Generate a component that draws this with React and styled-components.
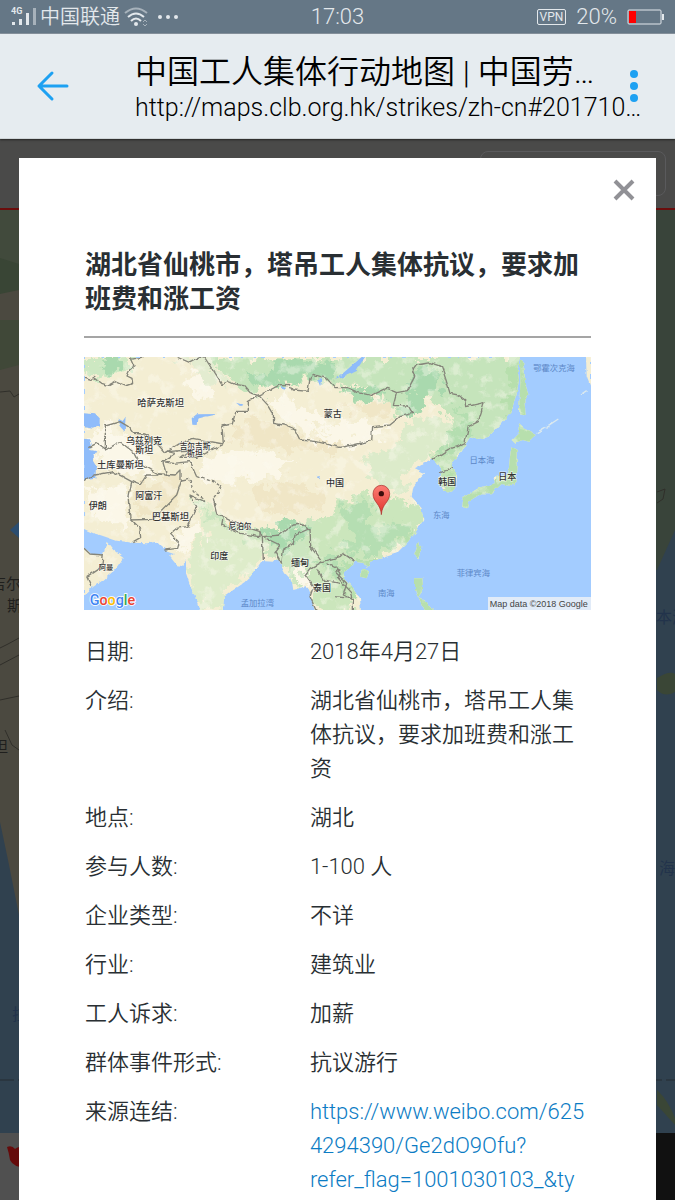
import React from "react";
import styled, { createGlobalStyle } from "styled-components";

const GlobalStyle = createGlobalStyle`
  * {
    box-sizing: border-box;
  }
  body {
    margin: 0;
    background: #4a4a49;
    color: #292f33;
    font-family: Roboto, "Noto Sans CJK SC", sans-serif;
    font-weight: 350;
  }
`;

const Page = styled.div`
  position: relative;
  display: flex;
  flex-direction: column;
  height: 100vh;
  overflow: hidden;
`;

const StatusBar = styled.div`
  display: grid;
  grid-template-columns: 1fr auto 1fr;
  align-items: center;
  flex: none;
  height: 34px;
  padding: 0 11px;
  background: #657786;
  border-bottom: 1px solid #8995a0;
  color: #e3e8ec;
  font-size: 22px;
  line-height: 34px;
`;

const StatusGroup = styled.div`
  display: flex;
  align-items: center;
  gap: ${({ $gap }) => $gap}px;
  justify-content: ${({ $end }) => ($end ? "flex-end" : "flex-start")};
`;

const Carrier = styled.span`
  font-size: 20px;
`;

const Vpn = styled.span`
  border: 1px solid #e3e8ec;
  border-radius: 2px;
  padding: 0 2px;
  font-size: 12px;
  font-weight: 400;
  line-height: 14px;
`;

const AppBar = styled.header`
  position: relative;
  z-index: 2;
  display: flex;
  align-items: center;
  flex: none;
  height: 105px;
  padding: 0 33px 0 29px;
  background: #e6ecf0;
  border-bottom: 1px solid #cfd5d8;
  box-shadow: 0 1px 2px rgba(0, 0, 0, 0.5);
  color: #000;
`;

const IconButton = styled.button`
  display: flex;
  flex: none;
  padding: 0;
  border: 0;
  background: none;
  cursor: pointer;
`;

const PageInfo = styled.div`
  flex: 1;
  min-width: 0;
  margin-left: 58px;
  padding-top: 4px;
`;

const PageTitle = styled.div`
  overflow: hidden;
  margin-right: 24px;
  font-size: 32px;
  line-height: 40px;
  text-overflow: ellipsis;
  white-space: nowrap;
`;

const PageUrl = styled.div`
  overflow: hidden;
  margin-right: -16px;
  font-size: 25px;
  line-height: 32px;
  text-overflow: ellipsis;
  white-space: nowrap;
`;

const Viewport = styled.main`
  position: relative;
  flex: 1;
  min-height: 0;
  padding: 19px 19px 0;
`;

const Backdrop = styled.div`
  position: absolute;
  inset: 0;
  display: flex;
  flex-direction: column;
`;

const SiteHeader = styled.div`
  flex: none;
  height: 71px;
  padding: 12px 9px 12px 480px;
  border-bottom: 2px solid #6b0d0c;
  background: #4a4a49;
`;

const SiteMenu = styled.div`
  height: 45px;
  border: 1px solid #5a5a5c;
  border-radius: 8px;
`;

const SiteMap = styled.svg`
  display: block;
  flex: 1;
  width: 100%;
  min-height: 0;
`;

const SiteFooter = styled.div`
  flex: none;
  height: 67px;
  background: linear-gradient(90deg, #505050 50%, #111 50%);
`;

const Modal = styled.section`
  position: relative;
  height: 100%;
  padding: 17px 65px 0;
  overflow: hidden;
  background: #fff;
`;

const CloseRow = styled.div`
  display: flex;
  justify-content: flex-end;
  margin: 0 -46px 43px 0;
`;

const Heading = styled.h1`
  margin: 0;
  padding-bottom: 20px;
  padding-left: 1px;
  border-bottom: 2px solid #a5a5a5;
  font-size: 26px;
  font-weight: 700;
  line-height: 34px;
`;

const Map = styled.svg`
  display: block;
  width: 100%;
  margin: 19px 0 25px;
  font-family: Roboto, "Noto Sans CJK SC", sans-serif;
`;

const Details = styled.dl`
  display: flex;
  flex-direction: column;
  gap: 15px;
  margin: 0;
  padding-left: 1px;
  font-size: 22px;
  line-height: 34px;
`;

const Row = styled.div`
  display: grid;
  grid-template-columns: 4fr 5fr;
`;

const Label = styled.dt``;

const Value = styled.dd`
  margin: 0;
  overflow-wrap: anywhere;
`;

const Link = styled.a`
  color: #0c7cc4;
  text-decoration: none;
`;

const land = [
  "M12 21H1320L1313 60 1317 90 1310 130 1295 180 1265 220 1225 260 1195 270 1170 262 1155 285 1140 310 1115 335 1120 350 1133 385 1130 410 1115 425 1090 422 1075 385 1090 370 1075 345 1060 325 1030 340 1005 355 1035 370 1015 390 1000 410 995 440 1025 475 1030 510 1005 550 980 580 950 610 905 625 870 635 860 655 855 640 825 635 795 665 795 690 825 720 840 745 843 785H705L690 730 680 705 660 715 640 720 635 690 615 670 605 650 595 625 580 635 545 633 528 658 510 680 490 700 460 720 432 740 428 785H362L345 740 330 705 318 670 318 630 310 648 290 645 270 620 285 612 265 605 245 590 230 575 200 580 160 578 110 572 80 562 60 555 40 550 12 537Z",
  "M12 593 40 615 70 612 80 575 100 600 131 625 110 655 70 690 40 710 12 735Z",
  "M1320 30 1333 40 1335 100 1345 130 1333 150 1337 195 1317 190 1321 100Z",
  "M1317 220 1340 240 1367 255 1345 275 1325 270 1305 280 1295 270 1315 250Z",
  "M1295 290 1313 300 1313 345 1310 390 1295 408 1265 402 1235 430 1205 430 1165 455 1145 445 1195 415 1245 400 1240 385 1285 370 1290 320Z",
  "M1150 440 1168 447 1160 475 1147 470Z",
  "M1015 580 1027 590 1015 625 1003 615Z",
  "M845 660 870 660 860 685 840 680Z",
  "M1005 685 1027 685 1030 720 1015 740 1005 720Z",
  "M1015 740 1040 755 1050 775 1075 785 1035 785Z",
  "M1518 21H1533V115L1520 80Z",
];

const greens = [
  { fill: "#cde8c2", d: "M12 21H150L150 60 90 75 12 85Z" },
  { fill: "#a9d9ae", d: "M70 21H130L110 60 95 70 75 45Z" },
  { fill: "#e3ecd0", d: "M290 21H380L440 100 400 110 350 70Z" },
  { fill: "#c5e4bb", d: "M380 21H1320V180L1200 285 1110 340 1060 320 1080 270 1110 200 1040 130 1000 190 950 195 900 130 850 110 780 110 700 90 600 105 530 130 440 90Z" },
  { fill: "#a9d9ae", d: "M580 25 760 40 770 90 690 80 630 100 540 120 500 70 570 80Z" },
  { fill: "#a9d9ae", d: "M1010 60 1060 50 1095 90 1060 130 1030 180 1000 200 960 190 990 140 990 90Z" },
  { fill: "#a9d9ae", d: "M800 115 930 120 890 145 830 150Z" },
  { fill: "#b4deb0", d: "M1105 160 1150 180 1180 240 1150 280 1110 310 1060 320 1110 260 1150 200Z" },
  { fill: "#dcebca", d: "M1000 210 1100 200 1120 250 1060 320 980 350 930 300Z" },
  { fill: "#deecca", d: "M330 440 400 470 430 520 560 560 540 640 430 740 420 785 360 785 320 640 380 540Z" },
  { fill: "#cce6c0", d: "M350 455 430 500 540 545 700 510 760 560 700 610 640 720 600 630 540 580 420 530Z" },
  { fill: "#a9d9ae", d: "M545 540 640 520 690 530 680 560 610 600 550 565Z" },
  { fill: "#cbe6bc", d: "M690 540 760 470 850 430 940 440 1000 460 1030 500 990 570 900 625 800 640 830 785H710L680 660Z" },
  { fill: "#b5deb2", d: "M770 480 850 450 880 480 850 520 910 540 950 500 990 530 940 590 870 610 790 600 830 550Z" },
  { fill: "#b5deb2", d: "M700 640 760 620 800 650 760 680 730 660Z" },
  { fill: "#dcebca", d: "M850 320 930 300 1000 340 970 390 1000 430 900 420Z" },
  { fill: "#c0e2b4", d: "M1050 325 1130 330 1140 420 1080 420Z" },
  { fill: "#b7dfad", d: "M1295 21H1400V490H1110V390H1260Z" },
  { fill: "#b7dfad", d: "M970 550H1110V820H970Z" },
  { fill: "#b7dfad", d: "M800 630H910V730H800Z" },
];

const sands = [
  "M370 340 420 310 560 300 640 340 600 370 520 390 430 400 360 385Z",
  "M560 150 600 140 700 190 740 240 680 250 620 210Z",
  "M770 220 860 215 930 240 880 265 800 290 690 270Z",
  "M20 240 90 230 200 310 230 370 150 380 60 340Z",
  "M330 70 390 90 400 140 350 140 310 100Z",
  "M20 420 150 400 140 540 40 510Z",
  "M280 560 350 510 370 560 300 620Z",
  "M640 660 680 640 690 700 640 715Z",
];

const ochres = [
  "M430 250 530 200 650 250 780 290 780 310 640 300 500 280Z",
  "M500 420 620 390 740 430 720 480 620 490 520 460Z",
  "M150 420 300 380 290 480 180 500Z",
  "M380 590 460 600 440 700 370 690Z",
  "M780 160 940 150 930 200 850 200Z",
];

const lakes = [
  "M12 187 45 190 59 205 59 225 38 233 12 228Z",
  "M12 266 30 268 36 285 30 300 52 304 36 328 48 348 46 386 12 391Z",
  "M112 205 128 213 137 200 134 242 122 228Z",
  "M335 205 350 193 415 192 375 200 352 206 350 225 337 224Z",
  "M765 90 800 60 845 21 855 21 830 60 790 80Z",
  "M602 107 618 110 612 121Z",
  "M712 88 725 84 720 108Z",
  "M468 158 490 164 480 168Z",
  "M710 380 720 378 716 388Z",
];

const borders = [
  "M12 85 30 90 42 82 65 100 85 106 105 95 135 108 158 100 156 85 141 78 150 58 162 50 152 28 190 21",
  "M290 21 330 38 360 22 375 24 425 103 442 93 465 103 492 107 510 128 536 136",
  "M536 136 570 120 600 104 628 103 640 120 684 124 690 85 700 73 740 85 765 113 800 112 835 128 875 136 920 115 950 128 982 122 1004 80 998 62 1010 45 1050 38 1085 50 1098 90 1110 130 1135 135 1155 150 1157 170 1212 158 1195 215 1165 230 1155 278 1130 290 1105 298 1058 328",
  "M536 136 568 170 580 190 581 220 610 225 645 240 660 270 710 275 780 292 820 285 875 272 878 230 930 225 960 200 998 190 985 168 940 166 950 128",
  "M536 136 505 155 505 184 467 184 457 222 426 228 430 282",
  "M76 300V228L120 215 145 230 160 250 195 252 235 285 255 308 300 280 340 265 430 282",
  "M25 293 50 280 76 300 95 290 120 275 165 310 180 340 235 372 260 375 248 335 280 340 330 335 350 380",
  "M235 372 285 375 300 360 300 390",
  "M248 335 285 310 260 305 330 300 300 322 350 322 430 282",
  "M12 393 45 375 100 365 155 395 145 450 150 505 180 535 182 565 160 578",
  "M155 395 180 405 200 375 235 375",
  "M150 510 215 508 240 485 290 435 305 390 330 385",
  "M253 600 290 595 295 575 272 550 290 535 320 530 350 470 330 435 375 455",
  "M400 445 410 490 430 500 480 525 540 545 547 560 600 555 640 525 670 522 690 540",
  "M430 500 425 525 480 550 540 560 540 545",
  "M547 560 550 630M547 560 600 585 585 605 605 640",
  "M605 640 610 600 640 580 645 555 690 535 692 590 725 635 780 620",
  "M725 635 690 655 675 675 700 710 690 740 710 785",
  "M710 655 730 690 780 700M740 640 780 660 765 665 800 700 790 735 820 750 820 785",
  "M780 620 790 610 825 635M765 650 780 670 775 685 812 725 815 745 765 740",
  "M12 595 30 612 70 615M20 680 35 712M70 612 65 650 20 680",
  "M1080 368 1100 362 1120 352",
];

const places = [
  { x: 242, y: 169, s: 28, t: "哈萨克斯坦" },
  { x: 192, y: 282, s: 27, t: "乌兹别克" },
  { x: 193, y: 308, s: 27, t: "斯坦" },
  { x: 345, y: 296, s: 23, t: "吉尔吉斯" },
  { x: 345, y: 319, s: 23, t: "斯坦" },
  { x: 121, y: 355, s: 28, t: "土库曼斯坦" },
  { x: 758, y: 200, s: 27, t: "蒙古" },
  { x: 765, y: 407, s: 27, t: "中国" },
  { x: 1102, y: 405, s: 27, t: "韩国" },
  { x: 1282, y: 391, s: 27, t: "日本" },
  { x: 206, y: 446, s: 27, t: "阿富汗" },
  { x: 53, y: 476, s: 27, t: "伊朗" },
  { x: 271, y: 510, s: 28, t: "巴基斯坦" },
  { x: 480, y: 538, s: 23, t: "尼泊尔" },
  { x: 418, y: 626, s: 27, t: "印度" },
  { x: 78, y: 659, s: 22, t: "阿曼" },
  { x: 660, y: 647, s: 27, t: "缅甸" },
  { x: 726, y: 724, s: 27, t: "泰国" },
  { x: 1422, y: 63, s: 25, t: "鄂霍次克海", sea: true },
  { x: 1206, y: 338, s: 25, t: "日本海", sea: true },
  { x: 1084, y: 504, s: 25, t: "东海", sea: true },
  { x: 1180, y: 678, s: 25, t: "菲律宾海", sea: true },
  { x: 919, y: 738, s: 25, t: "南海", sea: true },
  { x: 532, y: 767, s: 25, t: "孟加拉湾", sea: true },
];

const details = [
  ["日期:", "2018年4月27日"],
  ["介绍:", "湖北省仙桃市，塔吊工人集体抗议，要求加班费和涨工资"],
  ["地点:", "湖北"],
  ["参与人数:", "1-100 人"],
  ["企业类型:", "不详"],
  ["行业:", "建筑业"],
  ["工人诉求:", "加薪"],
  ["群体事件形式:", "抗议游行"],
];

const source = "https://www.weibo.com/6254294390/Ge2dO9Ofu?refer_flag=1001030103_&ty";

const StrikeMap = () => (
  <Map viewBox="12 21 1521 759" role="img" aria-label="湖北">
    <defs>
      <filter id="rough" x="-5%" y="-5%" width="110%" height="110%">
        <feTurbulence type="fractalNoise" baseFrequency="0.05" numOctaves="2" seed="4" />
        <feDisplacementMap in="SourceGraphic" scale="12" xChannelSelector="R" yChannelSelector="G" />
      </filter>
      <filter id="terrain" x="-5%" y="-5%" width="110%" height="110%">
        <feTurbulence type="fractalNoise" baseFrequency="0.03" numOctaves="4" seed="9" />
        <feDisplacementMap in="SourceGraphic" scale="80" xChannelSelector="R" yChannelSelector="G" />
        <feGaussianBlur stdDeviation="2" />
      </filter>
      <filter id="speckle" x="0" y="0" width="100%" height="100%">
        <feTurbulence type="fractalNoise" baseFrequency="0.025" numOctaves="4" seed="21" />
        <feColorMatrix values="0 0 0 0 0.98  0 0 0 0 0.96  0 0 0 0 0.88  6 0 0 0 -3.2" />
      </filter>
      <clipPath id="land">
        {land.map((d) => (
          <path key={d} d={d} />
        ))}
      </clipPath>
      <linearGradient id="pin" x1="0" y1="0" x2="0" y2="1">
        <stop offset="0" stopColor="#fc7d74" />
        <stop offset="1" stopColor="#e0352b" />
      </linearGradient>
    </defs>
    <rect x="12" y="21" width="1521" height="759" fill="#a3ccff" />
    <g filter="url(#rough)">
      <g clipPath="url(#land)">
        <rect x="0" y="0" width="1560" height="800" fill="#f4eed3" />
        <g filter="url(#terrain)">
          {ochres.map((d) => (
            <path key={d} d={d} fill="#f0e6c6" />
          ))}
          {sands.map((d) => (
            <path key={d} d={d} fill="#fbf7e8" />
          ))}
          {greens.map((g) => (
            <path key={g.d} d={g.d} fill={g.fill} />
          ))}
        </g>
        <rect x="0" y="0" width="1560" height="800" filter="url(#speckle)" opacity="0.4" />
      </g>
      {lakes.map((d) => (
        <path key={d} d={d} fill="#8fbcfa" />
      ))}
      <path d="M1370 248 1400 230 1435 207M1500 135 1520 122" stroke="#dbe9ee" strokeWidth="4" fill="none" />
    </g>
    <g filter="url(#rough)" fill="none" stroke="#85857a" strokeWidth="4" strokeLinejoin="round">
      {borders.map((d) => (
        <path key={d} d={d} />
      ))}
      <path d="M330 390 340 425 375 450M350 380 400 395 425 410 400 445" strokeDasharray="9 7" />
    </g>
    {places.map((p) => (
      <text
        key={p.t + p.y}
        x={p.x}
        y={p.y}
        fontSize={p.s}
        fontWeight={p.sea ? 400 : 500}
        textAnchor="middle"
        fill={p.sea ? "#5c87c7" : "#333"}
        stroke={p.sea ? "none" : "#fff"}
        strokeWidth="4"
        strokeOpacity="0.6"
        paintOrder="stroke"
      >
        {p.t}
      </text>
    ))}
    <path
      d="M904 494C902 461 879 457 879 431A25 25 0 0 1 929 431C929 457 906 461 904 494Z"
      fill="url(#pin)"
      stroke="#a52b27"
      strokeWidth="2"
    />
    <circle cx="904" cy="431" r="8" fill="#3c0d0b" />
    <text x="29" y="765" fontSize="43" fontWeight="500" stroke="#fff" strokeWidth="5" paintOrder="stroke">
      <tspan fill="#4285f4">G</tspan>
      <tspan fill="#ea4335">o</tspan>
      <tspan fill="#fbbc05">o</tspan>
      <tspan fill="#4285f4">g</tspan>
      <tspan fill="#34a853">l</tspan>
      <tspan fill="#ea4335">e</tspan>
    </text>
    <rect x="1224" y="741" width="309" height="39" fill="#f5f5f5" fillOpacity="0.75" />
    <text x="1229" y="770" fontSize="27" fontWeight="400" fill="#444" fontFamily="Liberation Sans, sans-serif">
      Map data ©2018 Google
    </text>
  </Map>
);

const DimmedMap = () => (
  <SiteMap viewBox="0 0 675 923" preserveAspectRatio="none" aria-hidden="true">
    <rect width="675" height="923" fill="#30414f" />
    <path d="M0 0H640V560L19 705 8 650 0 612Z" fill="#4b4940" />
    <path d="M0 0H19V70L0 60Z" fill="#414a3c" />
    <path d="M0 48 19 54V80L0 84Z" fill="#394535" />
    <path d="M0 110H19V155L0 160Z" fill="#404838" />
    <path d="M640 0H675V320L657 360H640Z" fill="#39443a" />
    <path d="M0 182 10 181 14 187 19 184M0 438 8 434 19 428M0 490 19 486M5 520 12 535 19 540M0 455 19 445" stroke="#302f2a" fill="none" strokeWidth="1" />
    <path d="M10 320 19 312V328Z" fill="#2b4d70" />
    <path d="M657 282 665 279 663 289 657 293" stroke="#302f2a" fill="none" />
    <path d="M657 468Q670 460 675 464V482Q665 488 657 480ZM657 880Q668 890 675 908V915L657 895Z" fill="#3a4636" />
    <path d="M0 870H675" stroke="#252d33" strokeWidth="1" strokeDasharray="14 4" />
    <g fill="#1f1f1d" fontSize="15" fontFamily="Noto Sans CJK SC, sans-serif" fontWeight="400">
      <text x="-9" y="379">吉尔</text>
      <text x="7" y="401">斯坦</text>
      <text x="-7" y="542">坦</text>
    </g>
    <g fill="#22334b" fontSize="16" fontFamily="Noto Sans CJK SC, sans-serif" fontWeight="400">
      <text x="12" y="810">拉</text>
      <text x="656" y="413">本海</text>
      <text x="659" y="664">海</text>
    </g>
  </SiteMap>
);

const App = () => {
  return (
    <Page>
      <GlobalStyle />
      <StatusBar>
        <StatusGroup $gap={4}>
          <svg width="25" height="20" viewBox="0 0 25 20" aria-hidden="true">
            <text x="0" y="7" fontSize="9" fontWeight="700" fill="#e3e8ec">4G</text>
            <path d="M1 15h3v3H1zM8 12h3v6H8zM15 6h3v12h-3z" fill="#e3e8ec" />
            <path d="M22 1h3v17h-3z" fill="#a7b2bb" />
          </svg>
          <Carrier>中国联通</Carrier>
          <svg width="24" height="20" viewBox="0 0 24 20" fill="none" strokeWidth="2" aria-hidden="true">
            <path d="M1 6Q12-3 23 6" stroke="#a7b2bb" />
            <path d="M4 10Q12 3 20 10M7 14Q12 9 17 14" stroke="#e3e8ec" />
            <circle cx="12" cy="17" r="2" fill="#e3e8ec" />
            <path d="M19 15l2-2 2 2M19 17l2 2 2-2" stroke="#a7b2bb" strokeWidth="1" />
          </svg>
          <svg width="32" height="6" viewBox="0 0 32 6" fill="#e3e8ec" aria-hidden="true">
            <circle cx="8" cy="3" r="2" />
            <circle cx="16" cy="3" r="2" />
            <circle cx="24" cy="3" r="2" />
          </svg>
        </StatusGroup>
        <span>17:03</span>
        <StatusGroup $gap={10} $end>
          <Vpn>VPN</Vpn>
          <span>20%</span>
          <svg width="37" height="16" viewBox="0 0 37 16" aria-hidden="true">
            <rect x="1" y="1" width="33" height="14" rx="1" fill="none" stroke="#e3e8ec" />
            <rect x="2" y="2" width="7" height="12" fill="#f00" />
            <path d="M35 5h2v6h-2z" fill="#e3e8ec" />
          </svg>
        </StatusGroup>
      </StatusBar>
      <AppBar>
        <IconButton aria-label="返回">
          <svg width="48" height="48" viewBox="0 0 48 48" fill="none" stroke="#1da1f2" strokeWidth="3" strokeLinecap="round" strokeLinejoin="round">
            <path d="M38 24H10M23 11 10 24 23 37" />
          </svg>
        </IconButton>
        <PageInfo>
          <PageTitle>中国工人集体行动地图 | 中国劳工通讯</PageTitle>
          <PageUrl>http://maps.clb.org.hk/strikes/zh-cn#201710201804</PageUrl>
        </PageInfo>
        <IconButton aria-label="更多">
          <svg width="16" height="32" viewBox="0 0 16 32" fill="#1da1f2">
            <circle cx="8" cy="4" r="4" />
            <circle cx="8" cy="16" r="4" />
            <circle cx="8" cy="28" r="4" />
          </svg>
        </IconButton>
      </AppBar>
      <Viewport>
        <Backdrop>
          <SiteHeader>
            <SiteMenu />
          </SiteHeader>
          <DimmedMap />
          <SiteFooter>
            <svg width="60" height="60" viewBox="0 0 60 60" aria-hidden="true">
              <path d="M7 14Q12 12 15 16 20 12 32 14V34Q14 36 10 27 9 20 7 14Z" fill="#650b0b" />
            </svg>
          </SiteFooter>
        </Backdrop>
        <Modal role="dialog" aria-modal="true">
          <CloseRow>
            <IconButton aria-label="关闭">
              <svg width="26" height="30" viewBox="0 0 26 30" stroke="#919196" strokeWidth="4">
                <path d="M4 6 22 24M22 6 4 24" />
              </svg>
            </IconButton>
          </CloseRow>
          <Heading>湖北省仙桃市，塔吊工人集体抗议，要求加班费和涨工资</Heading>
          <StrikeMap />
          <Details>
            {details.map(([label, value]) => (
              <Row key={label}>
                <Label>{label}</Label>
                <Value>{value}</Value>
              </Row>
            ))}
            <Row>
              <Label>来源连结:</Label>
              <Value>
                <Link href={source}>{source}</Link>
              </Value>
            </Row>
          </Details>
        </Modal>
      </Viewport>
    </Page>
  );
};

export default App;
